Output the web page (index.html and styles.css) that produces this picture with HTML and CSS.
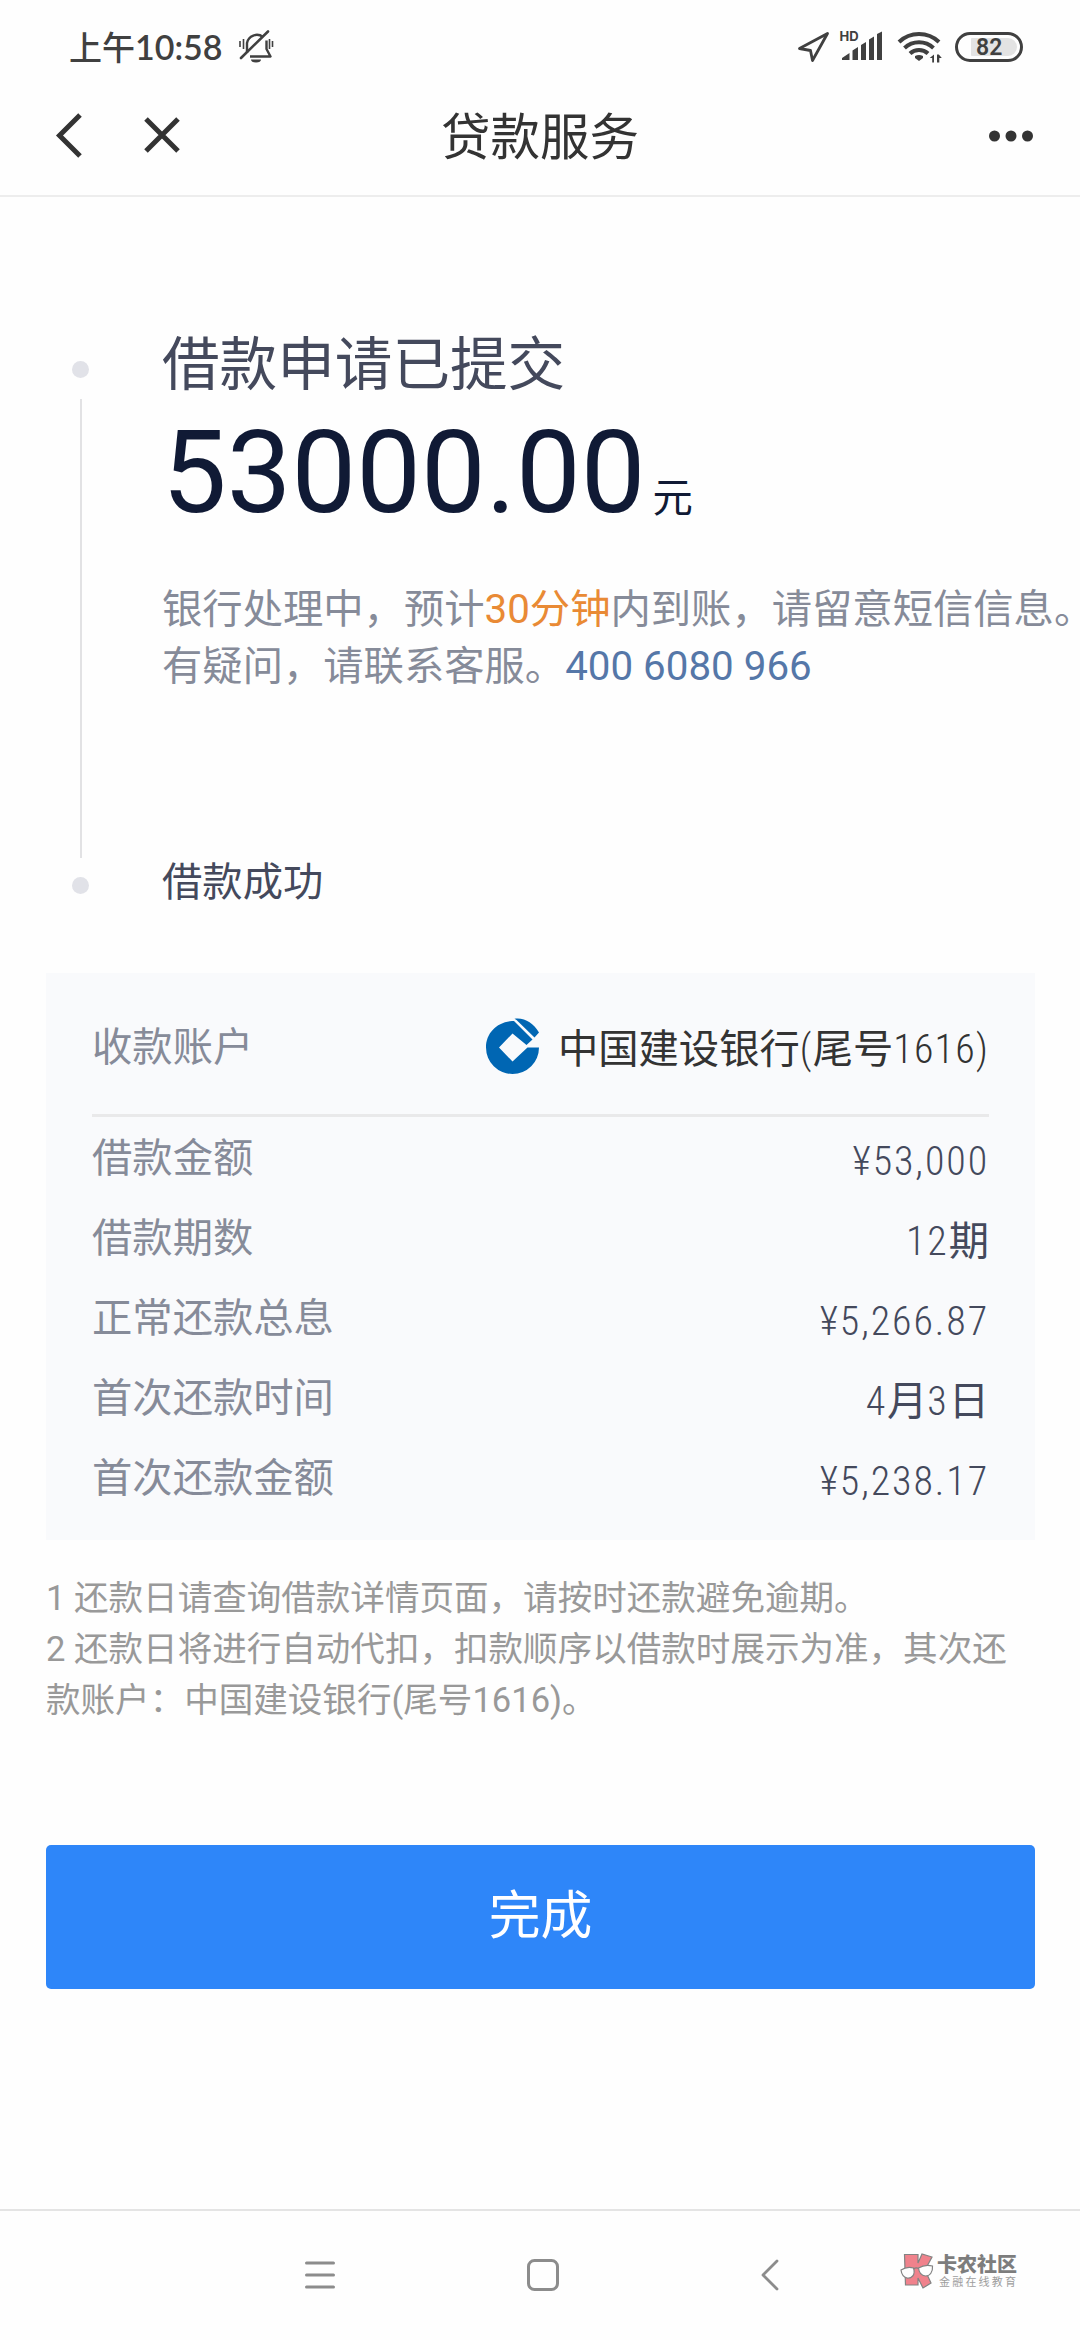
FILE: index.html
```html
<!DOCTYPE html>
<html lang="zh-CN">
<head>
<meta charset="utf-8">
<title>贷款服务</title>
<link rel="stylesheet" href="styles.css">
</head>
<body>
<div class="screen">
  <header class="status">
    <span class="clock"><span class="clock-cn">上午</span>10:58</span>
    <svg class="mute" width="36" height="36" viewBox="0 0 36 36" fill="none" stroke="#404040" stroke-width="2.4">
      <path d="M9 24V14A10 10 0 0 1 25 8M28.500 11.500V20L32.500 27.500H12" stroke-linejoin="round"/>
      <path d="M3 29 30 2.500" stroke-width="2.600" stroke-linecap="round"/>
      <path d="M2 12v6M5.500 10v10M31.500 10v10M34.500 12v6" stroke-width="1.600"/>
      <path d="M13 30.500H23A5 3 0 0 1 13 30.500Z" fill="#404040" stroke="none"/>
    </svg>
    <span class="spacer"></span>
    <svg class="icons" width="150" height="40" viewBox="0 0 150 40" fill="none" stroke="#404040">
      <path d="M1.500 19 29.500 4 14.500 31 12.500 21Z" stroke-width="2.800" stroke-linejoin="round" transform="translate(0 .5)"/>
      <g fill="#404040" stroke="none">
        <path d="M44 31V29L51.500 24V31ZM54.500 31V21.500L60 18V31ZM63 31V16L68 13V31ZM71 31V10.500L76 7.500V31ZM79 31V5L84 2.500V31Z"/>
        <path d="M117 27Q121 25 125 27V29L121 32 117 29Z"/>
        <path d="M135 26.500v8h-1.800v-4.500h-2.500ZM138 34.500v-8h1.800l3 3.500h-2.500v4.500Z" transform="translate(1 -1)"/>
      </g>
      <g stroke-width="4">
        <path d="M101 13A29 29 0 0 1 141 13M106.500 19A21 21 0 0 1 135.500 19M112 24.500A13 13 0 0 1 130 24.500"/>
      </g>
      <text class="hd" x="41.500" y="12">HD</text>
    </svg>
    <span class="battery"><span class="level">82</span></span>
  </header>

  <nav class="titlebar">
    <svg class="nav-left" width="130" height="46" viewBox="0 0 130 46" fill="none" stroke="#333" stroke-width="5">
      <path d="M25 2 4.500 22.500 25 43"/><path d="M91 6 123 38M123 6 91 38"/>
    </svg>
    <h1>贷款服务</h1>
    <svg class="nav-more" width="46" height="12" viewBox="0 0 46 12" fill="#333"><circle cx="6.500" cy="6" r="5.500"/><circle cx="23" cy="6" r="5.500"/><circle cx="39.500" cy="6" r="5.500"/></svg>
  </nav>

  <main>
    <section class="timeline">
      <div class="track"><i class="dot"></i><i class="line"></i><i class="dot"></i></div>
      <div class="steps">
        <h2>借款申请已提交</h2>
        <div class="amount">53000.00<span>元</span></div>
        <p class="hint">银行处理中，预计<b>30分钟</b>内到账，请留意短信信息。<br>有疑问，请联系客服。<a>400 6080 966</a></p>
        <h3>借款成功</h3>
      </div>
    </section>

    <section class="card">
      <div class="account">
        <span class="label">收款账户</span>
        <span class="bank">
          <svg width="54" height="56" viewBox="0 0 54 56">
            <path fill="#0066b3" d="M26 3C11 4 0 15 0 29.500A26.500 26.500 0 0 0 53 29.500H41.500L26.500 43.500 13 29.500 26.500 15.500 40.500 27 46.500 21.500 28 3Z"/>
            <path fill="#0066b3" d="M28.500 .8C39 -.5 47 5 53 14.500L48.500 19.500 30.500 2Z"/>
          </svg>
          <span class="bank-name">中国建设银行<span class="num">(</span>尾号<span class="num">1616)</span></span>
        </span>
      </div>
      <dl>
        <div><dt>借款金额</dt><dd><span class="num">¥53,000</span></dd></div>
        <div><dt>借款期数</dt><dd><span class="num">12</span>期</dd></div>
        <div><dt>正常还款总息</dt><dd><span class="num">¥5,266.87</span></dd></div>
        <div><dt>首次还款时间</dt><dd><span class="num">4</span>月<span class="num">3</span>日</dd></div>
        <div><dt>首次还款金额</dt><dd><span class="num">¥5,238.17</span></dd></div>
      </dl>
    </section>

    <p class="notes">1 还款日请查询借款详情页面，请按时还款避免逾期。<br>2 还款日将进行自动代扣，扣款顺序以借款时展示为准，其次还<br>款账户：中国建设银行(尾号1616)。</p>
    <button class="done" type="button">完成</button>
  </main>

  <footer class="sysnav">
    <svg class="menu" width="30" height="28" viewBox="0 0 30 28" stroke="#8c8c8c" stroke-width="3" stroke-linecap="round"><path d="M1.500 2h27M1.500 14h27M1.500 26h27"/></svg>
    <svg class="home" width="32" height="32" viewBox="0 0 32 32" fill="none" stroke="#8c8c8c" stroke-width="3"><rect x="1.500" y="1.500" width="29" height="29" rx="6"/></svg>
    <svg class="back" width="18" height="32" viewBox="0 0 18 32" fill="none" stroke="#8c8c8c" stroke-width="2.800" stroke-linecap="round" stroke-linejoin="round"><path d="M16 2 2 16 16 30"/></svg>
    <div class="brand">
      <svg width="34" height="36" viewBox="0 0 34 36" stroke="#7d7d7d" stroke-width="1.200">
        <path fill="#f07c86" d="M4.500 1.500H18V10L22 1 32 4 25 17 31 30 23 35 18 25V32H5.500Z"/>
        <path fill="#fff" d="M1 17Q7 13 13.500 15C16 22 11 26 7 25 3 24 1.500 21 1 17ZM18.500 15Q25 11 32.500 13C33 19 30 23 25.500 23 21.500 22.500 19 20 18.500 15Z"/>
        <path fill="none" d="M13.500 16Q16 14 18.500 15.500"/>
      </svg>
      <div class="brand-text"><strong>卡农社区</strong><small>金融在线教育</small></div>
    </div>
  </footer>
</div>
</body>
</html>
```

FILE: styles.css
```css
* { box-sizing: border-box; }
body {
  margin: 0;
  background: #fefefe;
  font-family: Roboto, "Noto Sans CJK SC", sans-serif;
  color: #333;
}
h1, h2, h3, p, dl, dd { margin: 0; font-weight: 400; }
.screen {
  width: 1080px;
  height: 2340px;
  overflow: hidden;
  display: flex;
  flex-direction: column;
}

.status {
  height: 90px;
  padding: 4px 57px 0 69px;
  display: flex;
  align-items: center;
  color: #404040;
}
.clock {
  font: 600 34px/50px Lato, "Noto Sans CJK SC", sans-serif;
  white-space: nowrap;
  width: 153px;
  margin-bottom: 2px;
}
.clock-cn { font-family: "Noto Sans CJK SC", sans-serif; font-weight: 500; font-size: 33px; }
.mute { margin: 0 0 0 16px; }
.spacer { flex: 1; }
.icons { margin: 4px 7px 0 0; }
.hd { font: 700 13px Inter, sans-serif; fill: #404040; stroke: none; }
.battery {
  width: 68px;
  height: 30px;
  border: 3px solid #404040;
  border-radius: 15px;
  padding: 3px 3px 3px 13px;
}
.level {
  display: block;
  height: 18px;
  background: #e3e3e3;
  border-radius: 1px 9px 9px 1px;
  padding-left: 5px;
  font: 600 23px/19px Roboto, sans-serif;
}

.titlebar {
  height: 107px;
  padding: 0 46px 13px 55px;
  border-bottom: 2px solid #ededed;
  display: grid;
  grid-template-columns: 1fr auto 1fr;
  align-items: center;
}
.titlebar h1 { margin-top: 4px; font-size: 49.5px; line-height: 72px; padding-right: 9px; }
.nav-more { justify-self: end; }

.timeline { display: flex; height: 776px; }
.track {
  flex: none;
  width: 162px;
  padding: 164px 0 0 72px;
  display: flex;
  flex-direction: column;
}
.dot { width: 17px; height: 17px; border-radius: 50%; background: #e1e2e8; }
.line { width: 2px; height: 459px; margin: 21px 0 19px 7.500px; background: #e2e2e4; }
.steps { flex: 1; white-space: nowrap; }
.steps h2 { margin-top: 127px; font-size: 57.6px; line-height: 84px; color: #44495c; }
.amount { font-size: 115.2px; line-height: 130px; color: #101a35; }
.amount span { font-size: 40.32px; line-height: 1; margin-left: 7px; }
.hint { margin-top: 43px; font-size: 40.32px; line-height: 57px; color: #868b99; }
.hint b { font-weight: 400; color: #e98a35; }
.hint a { color: #5577a8; }
.steps h3 { margin-top: 159px; font-size: 40.32px; line-height: 58px; color: #44495c; }

.card {
  margin: 0 45px 0 46px;
  height: 567px;
  padding: 0 46px;
  background: #f9fafc;
  font-size: 40.32px;
}
.account {
  height: 144px;
  border-bottom: 3px solid #e9e9ea;
  display: flex;
  justify-content: space-between;
  align-items: center;
}
.account .label, dt { color: #868b99; }
.bank { display: flex; align-items: center; gap: 18px; margin-top: 4px; line-height: 58px; }
.bank-name { padding-top: 8px; }
.num { font-stretch: 75%; font-weight: 350; font-size: 40px; letter-spacing: 1.9px; }
.bank .num { letter-spacing: 1.2px; }
dl { padding-top: 2px; }
dl div { height: 80px; display: flex; justify-content: space-between; line-height: 80px; }
dd { color: #44495c; padding-top: 3px; }

.notes { margin: 33px 0 0 46px; font-size: 34.56px; line-height: 51px; color: #999; white-space: nowrap; }
.done {
  display: block;
  width: 989px;
  height: 144px;
  margin: 119px 0 0 46px;
  border: 0;
  border-radius: 5px;
  background: #2e86f9;
  color: #fff;
  font: 51.84px/144px Roboto, "Noto Sans CJK SC", sans-serif;
  padding: 0;
}

.sysnav {
  margin-top: auto;
  height: 131px;
  border-top: 2px solid #e4e4e4;
  display: flex;
  align-items: center;
  padding: 0 0 2px 305px;
}
.home { margin-left: 192px; }
.back { margin-left: 202px; }
.brand { margin: -7px 0 0 121px; display: flex; gap: 3px; align-items: center; opacity: .95; }
.brand-text { display: flex; flex-direction: column; white-space: nowrap; color: #777; padding-top: 2px; }
.brand strong { font-size: 20px; line-height: 21px; font-weight: 900; }
.brand small { font-size: 11px; line-height: 13px; letter-spacing: 2.2px; margin-left: 2px; color: #999; }
```
